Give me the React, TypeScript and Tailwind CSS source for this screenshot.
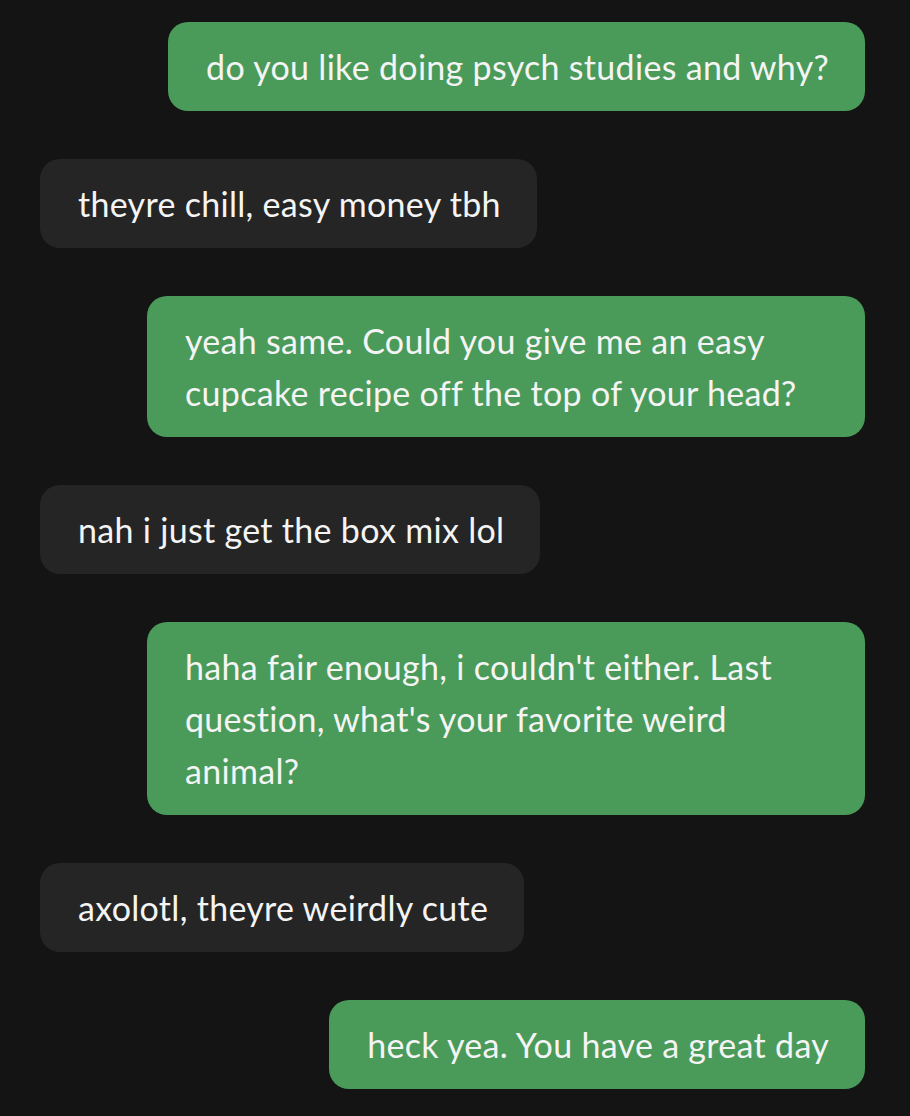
const messages: { me: boolean; lines: string[] }[] = [
  { me: true, lines: ["do you like doing psych studies and why?"] },
  { me: false, lines: ["theyre chill, easy money tbh"] },
  {
    me: true,
    lines: ["yeah same. Could you give me an easy", "cupcake recipe off the top of your head?"],
  },
  { me: false, lines: ["nah i just get the box mix lol"] },
  {
    me: true,
    lines: ["haha fair enough, i couldn't either. Last", "question, what's your favorite weird", "animal?"],
  },
  { me: false, lines: ["axolotl, theyre weirdly cute"] },
  { me: true, lines: ["heck yea. You have a great day"] },
];

export default function App() {
  return (
    <div
      className="min-h-screen bg-[#141414] px-[45px] pt-[22px] pb-[27px] flex flex-col gap-[48px] text-[#f4f4f4]"
      style={{ fontFamily: '"Lato", "Noto Sans", sans-serif' }}
    >
      {messages.map((m, i) => (
        <div key={i} className={m.me ? "flex justify-end" : "flex justify-start -ml-[5px]"}>
          <div
            className={
              "rounded-[20px] pl-[38px] pr-[36px] pt-[19px] pb-[18px] text-[34px] leading-[52px] tracking-[0.3px] " +
              (m.me ? "bg-[#4a9a5a] " : "bg-[#252525] ") +
              (m.lines.length > 1 ? "w-[718px]" : "w-fit")
            }
          >
            {m.lines.map((l, j) => (
              <div key={j} className="whitespace-nowrap">
                {l}
              </div>
            ))}
          </div>
        </div>
      ))}
    </div>
  );
}
